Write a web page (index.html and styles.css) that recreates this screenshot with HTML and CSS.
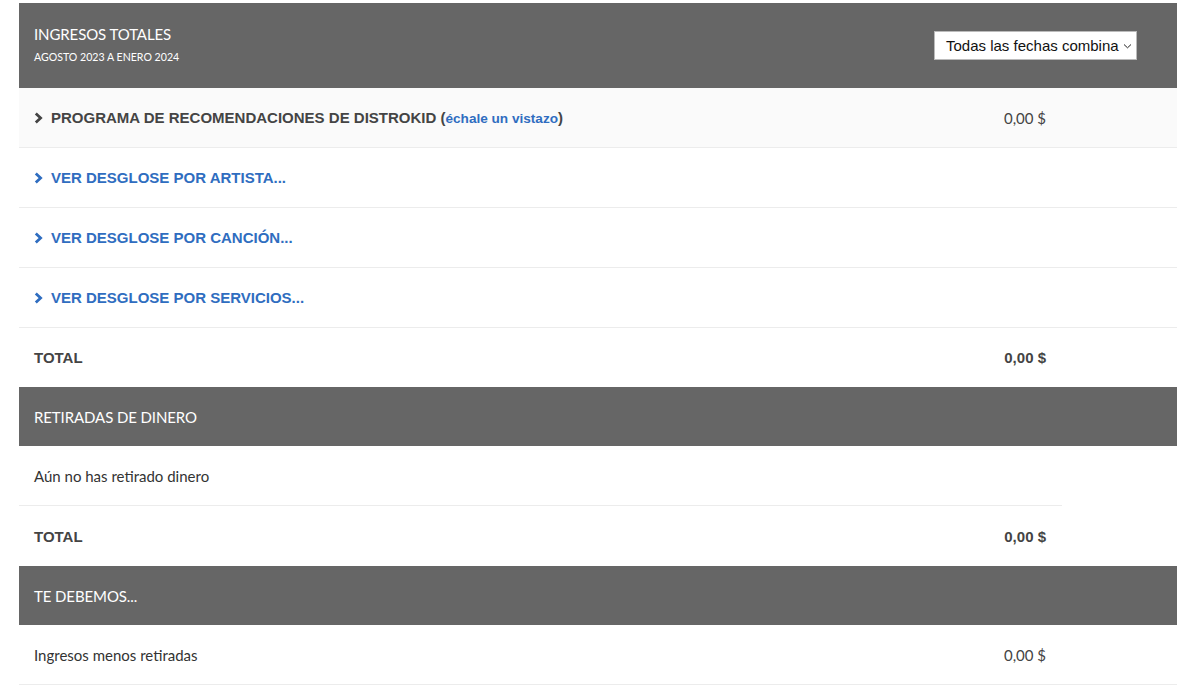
FILE: index.html
```html
<!DOCTYPE html>
<html lang="es">
<head>
    <meta charset="UTF-8">
    <meta name="viewport" content="width=device-width, initial-scale=1.0">
    <title>Ingresos</title>
    <link rel="stylesheet" href="styles.css">
</head>
<body>
    <div class="earnings">
        <!-- Ingresos totales -->
        <div class="section-head tall">
            <div>
                <div class="head-title">INGRESOS TOTALES</div>
                <div class="head-sub">AGOSTO 2023 A ENERO 2024</div>
            </div>
            <div class="range-select">
                <span>Todas las fechas combina</span>
                <svg width="9" height="6" viewBox="0 0 9 6"><polyline points="1,1.5 4.5,4.8 8,1.5" fill="none" stroke="#222" stroke-width="1"/></svg>
            </div>
        </div>

        <div class="row shaded">
            <div class="label strong"><svg class="chevron" width="9" height="12" viewBox="0 0 9 12"><polyline points="1.8,1.5 6.6,6 1.8,10.5" fill="none" stroke="currentColor" stroke-width="2.8"/></svg>PROGRAMA DE RECOMENDACIONES DE DISTROKID (<a href="#">échale un vistazo</a>)</div>
            <div class="amount">0,00 $</div>
        </div>
        <div class="row">
            <a class="label strong link" href="#"><svg class="chevron" width="9" height="12" viewBox="0 0 9 12"><polyline points="1.8,1.5 6.6,6 1.8,10.5" fill="none" stroke="currentColor" stroke-width="2.8"/></svg>VER DESGLOSE POR ARTISTA...</a>
        </div>
        <div class="row">
            <a class="label strong link" href="#"><svg class="chevron" width="9" height="12" viewBox="0 0 9 12"><polyline points="1.8,1.5 6.6,6 1.8,10.5" fill="none" stroke="currentColor" stroke-width="2.8"/></svg>VER DESGLOSE POR CANCIÓN...</a>
        </div>
        <div class="row">
            <a class="label strong link" href="#"><svg class="chevron" width="9" height="12" viewBox="0 0 9 12"><polyline points="1.8,1.5 6.6,6 1.8,10.5" fill="none" stroke="currentColor" stroke-width="2.8"/></svg>VER DESGLOSE POR SERVICIOS...</a>
        </div>
        <div class="row plain">
            <div class="label strong">TOTAL</div>
            <div class="amount strong">0,00 $</div>
        </div>

        <!-- Retiradas -->
        <div class="section-head">
            <div class="head-title">RETIRADAS DE DINERO</div>
        </div>
        <div class="row narrow">
            <div class="label">Aún no has retirado dinero</div>
        </div>
        <div class="row plain tall">
            <div class="label strong">TOTAL</div>
            <div class="amount strong">0,00 $</div>
        </div>

        <!-- Saldo -->
        <div class="section-head">
            <div class="head-title">TE DEBEMOS...</div>
        </div>
        <div class="row">
            <div class="label">Ingresos menos retiradas</div>
            <div class="amount">0,00 $</div>
        </div>
    </div>
</body>
</html>
```

FILE: styles.css
```css
body {
    margin: 0;
    background: #fff;
    font-family: 'Lato', sans-serif;
    color: #333;
}

.earnings {
    width: 1158px;
    margin: 3px 0 0 19px;
}

.section-head {
    display: flex;
    align-items: center;
    justify-content: space-between;
    height: 59px;
    padding: 0 40px 0 15px;
    background: #666;
    color: #fff;
}

.section-head.tall {
    height: 85px;
    align-items: flex-start;
    padding-top: 22px;
    box-sizing: border-box;
}

.head-title {
    font-size: 15px;
    letter-spacing: -0.1px;
}

.head-sub {
    margin-top: 8px;
    font-size: 10.6px;
}

.range-select {
    display: flex;
    align-items: center;
    justify-content: space-between;
    width: 203px;
    margin-top: 6px;
    height: 29px;
    padding: 0 4px 0 11px;
    background: #fff;
    border: 1px solid #bbb;
    box-sizing: border-box;
    font-family: 'Liberation Sans', Arial, sans-serif;
    font-size: 15px;
    color: #111;
}

.row {
    display: flex;
    align-items: center;
    justify-content: space-between;
    height: 59px;
    padding: 0 131px 0 15px;
    border-bottom: 1px solid #ececec;
    font-size: 15px;
}

.row.shaded {
    background: #fafafa;
}

.row.plain {
    border-bottom: none;
}

.row.tall {
    height: 60px;
}

.row.narrow {
    width: 1043px;
    padding-right: 0;
    box-sizing: border-box;
    height: 60px;
}

.label {
    display: block;
}

.strong {
    font-family: 'Liberation Sans', Arial, sans-serif;
    font-weight: bold;
    font-size: 15px;
    color: #444;
}

.label a,
.link {
    color: #2f6dc0;
    text-decoration: none;
}

.label a {
    font-size: 13.6px;
}

.chevron {
    margin-right: 8px;
    vertical-align: -1px;
}

.amount {
    color: #444;
}
```
